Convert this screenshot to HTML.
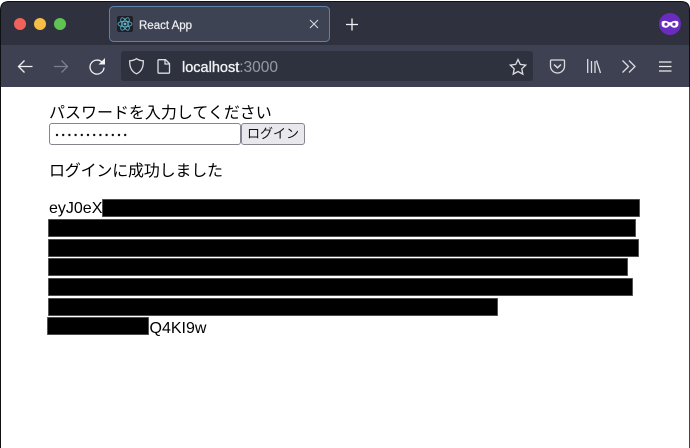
<!DOCTYPE html>
<html lang="ja">
<head>
<meta charset="utf-8">
<title>React App</title>
<style>
html,body{margin:0;padding:0;background:#fff;}
body{width:690px;height:448px;overflow:hidden;position:relative;font-family:"Liberation Sans","Noto Sans CJK JP",sans-serif;color:#000;}
.abs{position:absolute;white-space:nowrap;}
#chrome{position:absolute;left:0;top:0;width:690px;height:87px;}
.t{font-size:16px;line-height:20px;}
.r{position:absolute;background:#000;box-shadow:inset 0 0 0 .8px #666;}
#lb{position:absolute;left:0;top:87px;width:1px;height:361px;background:#111;}
#rb{position:absolute;right:0;top:87px;width:1px;height:361px;background:#444;}
#input{position:absolute;left:49px;top:123px;width:190px;height:20px;border:1px solid #85858f;border-radius:3px;background:#fff;}
#btn{position:absolute;left:241px;top:123px;width:62px;height:20px;border:1px solid #85858f;border-radius:3px;background:#e9e9ed;font-size:13px;line-height:20px;text-align:center;color:#111;}
</style>
</head>
<body>
<svg id="chrome" viewBox="0 0 690 87" xmlns="http://www.w3.org/2000/svg">
  <rect width="690" height="87" fill="#fff"/>
  <path d="M0 87V10Q0 1 9 1H681Q690 1 690 10V87Z" fill="#0e0f13"/>
  <path d="M1 45V10Q1 2 9 2H681Q689 2 689 10V45Z" fill="#2f323e"/>
  <rect x="1" y="45" width="688" height="42" fill="#3d4152"/>
  <circle cx="20" cy="24" r="6" fill="#f0625a"/>
  <circle cx="40" cy="24" r="6" fill="#f7bd45"/>
  <circle cx="60" cy="24" r="6" fill="#5fc454"/>
  <rect x="109.5" y="6.5" width="220" height="35" rx="4" fill="#3e4354" stroke="#5f80ab"/>
  <rect x="117" y="16" width="16" height="16" rx="2" fill="#1d2127"/>
  <g fill="none" stroke="#5fb6cf" stroke-width=".8">
    <ellipse cx="125" cy="24" rx="7" ry="2.8"/>
    <ellipse cx="125" cy="24" rx="7" ry="2.8" transform="rotate(60 125 24)"/>
    <ellipse cx="125" cy="24" rx="7" ry="2.8" transform="rotate(120 125 24)"/>
  </g>
  <circle cx="125" cy="24" r="1.4" fill="#5fb6cf"/>
  <path d="M310 20l8 8M318 20l-8 8" stroke="#d6d7dc" stroke-width="1.1" fill="none"/>
  <path d="M352 18.5v12M346 24.5h12" stroke="#f2f2f4" stroke-width="1.3" fill="none"/>
  <circle cx="670" cy="24" r="11" fill="#6a2cc0"/>
  <path d="M662 21.5c2-1 4.500-.8 6 .2 1.300.8 2.700.8 4 0 1.500-1 4-1.200 6-.2 .8 2 .5 4.500-1 5.500-2 1.200-4.500.8-6-.8-.9-.9-1.100-.9-2 0-1.500 1.600-4 2-6 .8-1.500-1-1.800-3.500-1-5.500z" fill="#fff"/>
  <circle cx="666" cy="24.200" r="1.600" fill="#6a2cc0"/>
  <circle cx="674" cy="24.200" r="1.600" fill="#6a2cc0"/>
  <rect x="121" y="51" width="412" height="30" rx="3" fill="#2e323e"/>
  <g fill="none" stroke="#f1f1f4" stroke-width="1.300">
    <path d="M32.500 66.500H18.700M24.500 60.500l-6 6 6 6"/>
    <path d="M54 66.500h13.500M61.500 60.500l6 6-6 6" stroke="#7d808c"/>
    <path d="M102.300 62.500A7 7 0 1 0 104 67.500"/>
  </g>
  <path d="M98.500 64.500h6.500v-6.500z" fill="#f1f1f4"/>
  <g fill="none" stroke="#dcdde2" stroke-width="1.300">
    <path d="M136.500 58.700c2 1.300 4.300 2 6.800 2.100.2 5.800-1.800 10.800-6.800 13-5-2.200-7-7.200-6.800-13 2.500-.1 4.800-.8 6.800-2.100z"/>
    <path d="M159 59.700h6.500l4 4v8.500a1 1 0 0 1-1 1H159a1 1 0 0 1-1-1V60.700a1 1 0 0 1 1-1zM165 60v4h4.300"/>
    <path d="M518 59.500l2.300 4.900 5.400.7-3.900 3.700 1 5.300-4.800-2.600-4.800 2.600 1-5.300-3.900-3.700 5.400-.7z"/>
    <path d="M551.500 60h12a1 1 0 0 1 1 1v5a7 7 0 0 1-14 0v-5a1 1 0 0 1 1-1z"/>
    <path d="M554 64.500l3.500 3.300 3.500-3.300" stroke-width="1.500"/>
    <path d="M587.700 59v14M591.500 61v12M595 61v12M596.500 60.500l4 12.500"/>
    <path d="M622.500 60.500l6 6-6 6M629 60.500l6 6-6 6"/>
    <path d="M659 62h12.500M659 66.500h12.500M659 71h12.500" stroke="#eceded"/>
  </g>
  <text x="139" y="29" font-family="'Liberation Sans',sans-serif" font-size="11.500" fill="#ebecef" stroke="#ebecef" stroke-width=".25">React App</text>
  <text x="182" y="72" font-family="'Liberation Sans',sans-serif" font-size="14.500" fill="#f0f1f3" stroke="#f0f1f3" stroke-width=".35">localhost<tspan fill="#92959f" stroke="#92959f" stroke-width=".1" font-size="15.500">:3000</tspan></text>
</svg>
<div id="lb"></div>
<div id="rb"></div>

<div class="abs t" style="left:49px;top:104px;letter-spacing:-.02px;">パスワードを入力してください</div>
<div id="input"></div>
<svg class="abs" style="left:55px;top:132px" width="76" height="6" xmlns="http://www.w3.org/2000/svg" fill="#111">
  <circle cx="2" cy="3" r="1.200"/><circle cx="8.200" cy="3" r="1.200"/><circle cx="14.400" cy="3" r="1.200"/><circle cx="20.600" cy="3" r="1.200"/><circle cx="26.800" cy="3" r="1.200"/><circle cx="33" cy="3" r="1.200"/><circle cx="39.200" cy="3" r="1.200"/><circle cx="45.400" cy="3" r="1.200"/><circle cx="51.600" cy="3" r="1.200"/><circle cx="57.800" cy="3" r="1.200"/><circle cx="64" cy="3" r="1.200"/><circle cx="70.200" cy="3" r="1.200"/>
</svg>
<div id="btn">ログイン</div>

<div class="abs t" style="left:49px;top:162px;letter-spacing:-.2px;">ログインに成功しました</div>

<div class="abs t" style="left:49px;top:199px;">eyJ0eX</div>
<div class="r" style="left:102px;top:199px;width:538px;height:18px;"></div>
<div class="r" style="left:48px;top:219px;width:588px;height:18px;"></div>
<div class="r" style="left:48px;top:239px;width:591px;height:18px;"></div>
<div class="r" style="left:48px;top:258px;width:580px;height:18px;"></div>
<div class="r" style="left:48px;top:278px;width:585px;height:18px;"></div>
<div class="r" style="left:48px;top:298px;width:450px;height:18px;"></div>
<div class="r" style="left:47px;top:317px;width:102px;height:18px;"></div>
<div class="abs t" style="left:149.500px;top:319px;">Q4KI9w</div>
</body>
</html>
